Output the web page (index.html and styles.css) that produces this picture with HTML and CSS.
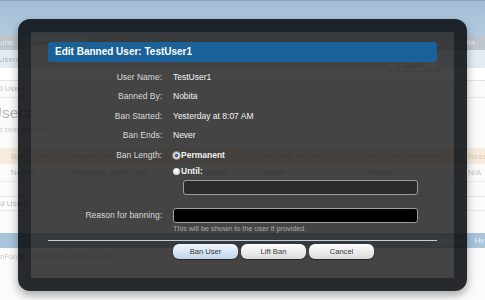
FILE: index.html
```html
<!DOCTYPE html>
<html lang="en">
<head>
<meta charset="utf-8">
<title>Edit Banned User</title>
<link rel="stylesheet" href="styles.css">
</head>
<body>
<div class="page">
  <div class="header"></div>
  <div class="tabs">
    <span class="tab first">Forums</span>
    <span class="tab active">Bans</span>
    <span class="tab user">Nobita</span>
  </div>
  <div class="subnav">
    <span class="subnav-link">Banned Users</span>
    <span class="search">&#9906; Search</span>
  </div>
  <div class="toolbar"></div>
  <div class="crumbs"><span class="crumb">Banned Users</span></div>
  <h1 class="title">Banned Users</h1>
  <p class="desc">Users that have been banned</p>
  <div class="table">
    <div class="trow thead">
      <span class="c c0"></span><span class="c c1">Banned By</span><span class="c c2">Banned On</span><span class="c c3">Ban Type</span><span class="c c4">Ban Will Be Lifted On</span><span class="c c5">Ban Time Remaining</span><span class="c c6">Reason</span>
    </div>
    <div class="trow">
      <span class="c c0"></span><span class="c c1">Nobita</span><span class="c c2">Yesterday at 8:07 AM</span><span class="c c3">Permanent</span><span class="c c4">Never</span><span class="c c5">Forever</span><span class="c c6">N/A</span>
    </div>
  </div>
  <div class="crumbs lower"><span class="crumb">Banned Users</span></div>
  <div class="spacer"></div>
  <div class="footer"><span>Contact Us</span><span>Help</span></div>
  <div class="copyright">Forum software by XenForo&reg; &copy;2010-2014 XenForo Ltd.</div>
</div>

<div class="overlay">
  <h2 class="ov-title">Edit Banned User: TestUser1</h2>
  <div class="form">
    <div class="lbl">User Name:</div><div class="val">TestUser1</div>
    <div class="lbl">Banned By:</div><div class="val">Nobita</div>
    <div class="lbl">Ban Started:</div><div class="val">Yesterday at 8:07 AM</div>
    <div class="lbl">Ban Ends:</div><div class="val">Never</div>
    <div class="lbl len">Ban Length:</div>
    <div class="val len">
      <div class="opt"><span class="radio on"></span>Permanent</div>
      <div class="opt"><span class="radio"></span>Until:</div>
      <div class="field date"></div>
    </div>
    <div class="lbl reason">Reason for banning:</div>
    <div class="val reason">
      <div class="field black"></div>
      <div class="hint">This will be shown to the user if provided.</div>
    </div>
  </div>
  <div class="rule"></div>
  <div class="buttons">
    <span class="btn primary">Ban User</span>
    <span class="btn">Lift Ban</span>
    <span class="btn">Cancel</span>
  </div>
</div>
</body>
</html>
```

FILE: styles.css
```css
* { box-sizing: border-box; }
html, body { margin: 0; padding: 0; }
body {
  width: 485px;
  height: 300px;
  overflow: hidden;
  position: relative;
  background: #fbfbfb;
  font-family: "Liberation Sans", Arial, sans-serif;
}

/* ---------- background page (faded) ---------- */
.page { filter: blur(0.4px); }
.header {
  height: 35px;
  background: linear-gradient(#a2bed6, #b3cbe0);
  border-top: 1px solid #8da5ba;
}
.tabs {
  height: 15px;
  background: #bec5cc;
  display: flex;
  font-size: 8px;
  color: #e8edf1;
}
.tab { line-height: 15px; white-space: nowrap; }
.tab.first { margin-left: -14px; width: 36px; }
.tab.active {
  width: 66px;
  padding-left: 10px;
  background: #d7dfe6;
  color: #9aa8b4;
  border-radius: 3px 3px 0 0;
}
.tab.user { margin-left: auto; margin-right: 10px; }

.subnav {
  height: 18px;
  background: #e4ebf1;
  display: flex;
  align-items: center;
  font-size: 8px;
  color: #aab6c0;
}
.subnav-link { margin-left: -31px; }
.search {
  margin-left: auto;
  margin-right: 45px;
  width: 52px;
  height: 12px;
  margin-top: 14px;
  border: 1px solid #dde3e8;
  background: #fff;
  font-size: 7px;
  color: #c4c8cc;
  padding-left: 6px;
  line-height: 10px;
}
.toolbar { height: 13px; background: #fff; border-bottom: 1px solid #e2e6ea; }
.crumbs {
  height: 17px;
  line-height: 16px;
  font-size: 8px;
  color: #b9c2ca;
  border-bottom: 1px solid #e6e9ec;
  white-space: nowrap;
}
.crumb { margin-left: -25px; }
.title {
  margin: 0 0 0 -67px;
  height: 27px;
  line-height: 30px;
  font-size: 15.5px;
  font-weight: normal;
  color: #b4b4b4;
  white-space: nowrap;
}
.desc {
  margin: 0 0 0 -46px;
  height: 23px;
  font-size: 7px;
  line-height: 10px;
  color: #cdcdcd;
  white-space: nowrap;
}
.trow {
  display: flex;
  height: 18px;
  align-items: center;
  font-size: 8px;
  color: #c2c2c2;
  white-space: nowrap;
  border-bottom: 1px solid #ececec;
}
.trow.thead { height: 16px; background: #f7ecde; color: #dcc9b2; border-bottom: none; }
.c { overflow: hidden; flex: none; }
.c0 { width: 11px; }
.c1 { width: 61px; }
.c2 { width: 116px; }
.c3 { width: 76px; }
.c4 { width: 104px; }
.c5 { width: 100px; }
.c6 { width: 30px; }
.crumbs.lower { margin-top: 14px; border-top: 1px solid #e6e9ec; height: 15px; line-height: 13px; }
.crumbs.lower .crumb { margin-left: -23px; }
.spacer { height: 22px; }
.footer {
  height: 15px;
  background: #a9c4db;
  display: flex;
  justify-content: flex-end;
  gap: 8px;
  margin-right: -6px;
  font-size: 8px;
  line-height: 15px;
  color: #e8f0f6;
}
.copyright {
  margin-left: -73px;
  font-size: 7.5px;
  line-height: 18px;
  color: #c6c6c6;
  white-space: nowrap;
}

/* ---------- overlay ---------- */
.overlay {
  position: absolute;
  left: 18px;
  top: 19px;
  width: 449px;
  height: 272px;
  border: 13px solid rgba(6, 10, 14, 0.87);
  border-radius: 12px;
  background: rgba(22, 22, 22, 0.8);
  background-clip: padding-box;
  box-shadow: 0 4px 10px rgba(0, 0, 0, 0.35);
  font-family: "Liberation Sans", Arial, sans-serif;
}
.ov-title {
  margin: 10px 17px 0;
  height: 20px;
  line-height: 20px;
  padding-left: 7px;
  background: #1b6199;
  border-radius: 3px;
  color: #fff;
  font-size: 10px;
  font-weight: bold;
}
.form {
  display: grid;
  grid-template-columns: 114px 245px;
  column-gap: 11px;
  margin: 5.5px 17px 0;
  font-size: 8.5px;
}
.lbl { text-align: right; color: #d8d8d8; line-height: 19.5px; white-space: nowrap; }
.val { color: #f2f2f2; line-height: 19.5px; white-space: nowrap; }
.lbl.len { margin-top: 1.5px; line-height: 16px; }
.val.len { margin-top: 1.5px; }
.opt {
  display: flex;
  align-items: center;
  height: 16px;
  line-height: 16px;
  font-weight: bold;
}
.radio {
  width: 7px;
  height: 7px;
  margin-right: 1px;
  border-radius: 50%;
  background: radial-gradient(circle at 45% 40%, #ffffff, #c9c9c9);
}
.radio.on {
  background: radial-gradient(circle, #2d6eae 0 1.6px, #e9ecef 2.2px, #c4c8cc);
  outline: 1px solid rgba(196, 168, 96, 0.85);
  outline-offset: 0.5px;
}
.field {
  height: 15px;
  border: 1px solid #9d9d9d;
  border-radius: 3px;
}
.field.date { margin: 1px 0 0 10px; background: #2b2b2b; }
.lbl.reason { margin-top: 13px; line-height: 15px; }
.val.reason { margin-top: 13px; line-height: normal; }
.field.black { background: #000; }
.hint {
  margin-top: 1px;
  font-size: 7.3px;
  line-height: 10px;
  color: #aaaaaa;
}
.rule {
  margin: 6px 17px 0;
  height: 1px;
  background: #c6cdd4;
}
.buttons {
  display: flex;
  gap: 3px;
  margin: 3px 0 0 142px;
}
.btn {
  width: 65px;
  height: 15px;
  border-radius: 6px;
  background: linear-gradient(#ffffff, #dadada);
  box-shadow: 0 1px 1px rgba(0, 0, 0, 0.45);
  font-size: 7.6px;
  color: #383838;
  display: flex;
  align-items: center;
  justify-content: center;
}
.btn.primary { background: linear-gradient(#f2f7fc, #bdd5ea); }
```
